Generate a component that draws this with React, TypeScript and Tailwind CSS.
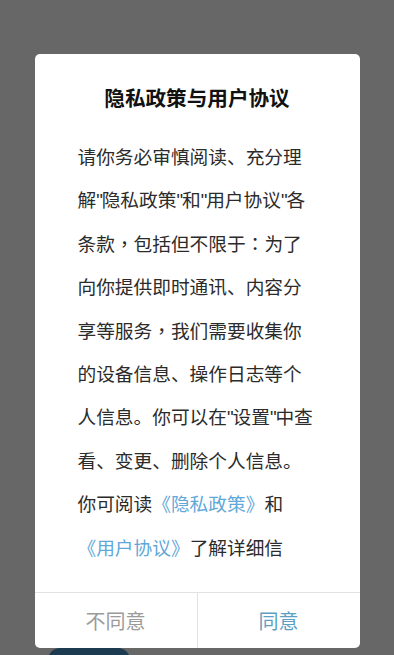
import React from "react";

const Q = () => (
  <span
    className="inline-block w-[5.5px] text-center"
    style={{ fontFamily: '"Liberation Sans", sans-serif' }}
  >
    "
  </span>
);

const P = ({ c }: { c: string }) => (
  <span style={{ fontFamily: '"Noto Sans CJK TC", sans-serif' }}>{c}</span>
);

const lines: React.ReactNode[] = [
  "请你务必审慎阅读、充分理",
  <>
    解<Q />隐私政策<Q />和<Q />用户协议<Q />各
  </>,
  <>
    条款<P c="，" />包括但不限于<P c="：" />为了
  </>,
  "向你提供即时通讯、内容分",
  <>
    享等服务<P c="，" />我们需要收集你
  </>,
  "的设备信息、操作日志等个",
  <>
    人信息。你可以在<Q />设置<Q />中查
  </>,
  "看、变更、删除个人信息。",
  <>
    你可阅读<span className="text-[#5fa8d8]">《隐私政策》</span>和
  </>,
  <>
    <span className="text-[#5fa8d8]">《用户协议》</span>了解详细信
  </>,
];

export default function App() {
  return (
    <div
      className="w-[394px] h-[655px] bg-[#676767] overflow-hidden flex flex-col items-center pt-[54px]"
      style={{ fontFamily: '"Noto Sans CJK SC", "Noto Sans", sans-serif' }}
    >
      <div className="w-[325px] h-[594px] shrink-0 bg-white rounded-[5px] flex flex-col overflow-hidden">
        <div className="pt-[29px] text-center text-[20.6px] leading-[28px] font-bold text-[#111]">
          隐私政策与用户协议
        </div>
        <div className="flex-1 pl-[43px] pt-[23px] text-[18.7px] leading-[43.4px] text-[#2b2b2b]">
          {lines.map((l, i) => (
            <div key={i} className="whitespace-nowrap h-[43.4px]">
              {l}
            </div>
          ))}
        </div>
        <div className="h-[56px] border-t border-[#e2e2e2] flex">
          <div className="flex-1 flex items-center justify-center text-[20px] text-[#9b9b9b] border-r border-[#e2e2e2]">
            不同意
          </div>
          <div className="flex-1 flex items-center justify-center text-[20px] text-[#5d9fc4]">
            同意
          </div>
        </div>
      </div>
      <div className="self-start ml-[48px] w-[82px] h-[20px] shrink-0 bg-[#1d3b50] rounded-t-[12px]" />
    </div>
  );
}
